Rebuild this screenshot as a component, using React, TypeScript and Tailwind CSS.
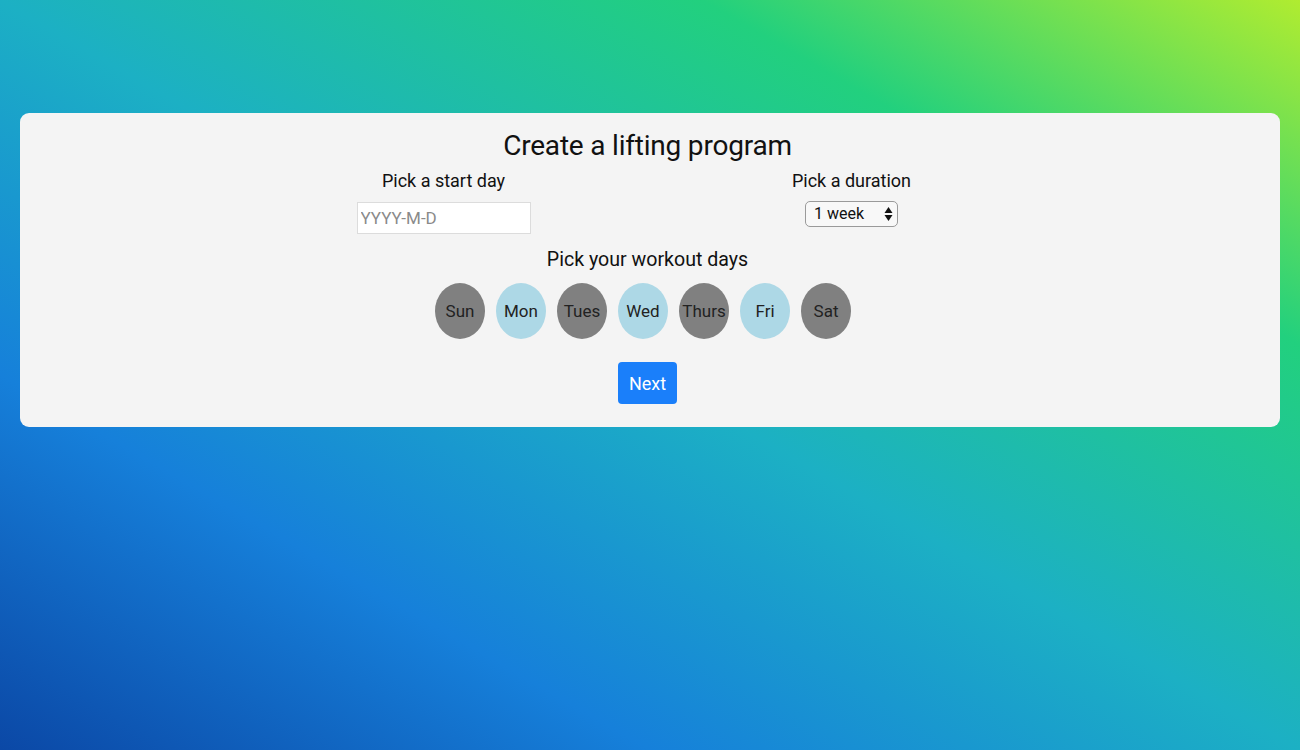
const days = [
  { name: "Sun", on: false },
  { name: "Mon", on: true },
  { name: "Tues", on: false },
  { name: "Wed", on: true },
  { name: "Thurs", on: false },
  { name: "Fri", on: true },
  { name: "Sat", on: false },
];

export default function App() {
  return (
    <div className="h-[750px] w-full overflow-hidden bg-[linear-gradient(to_top_right,#0b48a6_0%,#1680da_25%,#1cb0c4_50%,#22d07e_77%,#b0ec30_100%)] pt-[113px] font-['Roboto','Liberation_Sans',sans-serif] text-[#111]">
      <div className="mx-5 rounded-[9px] bg-[#f4f4f4] pb-[23px] pr-[5px] pt-[16px] text-center">
        <h1 className="text-[28px] leading-[34px] tracking-[-0.2px]">Create a lifting program</h1>

        {/* start day + duration */}
        <div className="mt-[6px] flex justify-center">
          <div className="flex w-[408px] flex-col items-center">
            <label className="text-[18px] leading-[24px]">Pick a start day</label>
            <input
              type="text"
              placeholder="YYYY-M-D"
              className="mt-[9px] h-[32px] w-[174px] border border-[#dcdcdc] bg-white px-[3px] text-[17px] outline-none placeholder:text-[#8a8a8a]"
            />
          </div>
          <div className="flex w-[408px] flex-col items-center">
            <label className="text-[18px] leading-[24px]">Pick a duration</label>
            <div className="mt-[8px] flex h-[26px] w-[93px] items-center justify-between rounded-[5px] border border-[#9a9a9a] bg-[#f8f8f8] pl-[8px] pr-[4px] text-[16px]">
              <span>1 week</span>
              <svg width="9" height="16" viewBox="0 0 9 16">
                <path d="M4.5 1 L8.5 7 L0.5 7 Z" fill="#111" />
                <path d="M4.5 15 L8.5 9 L0.5 9 Z" fill="#111" />
              </svg>
            </div>
          </div>
        </div>

        <h2 className="mt-[12px] text-[19.6px] leading-[28px]">Pick your workout days</h2>

        <div className="mt-[9px] flex justify-center gap-[11px] pr-[9px]">
          {days.map((d) => (
            <button
              key={d.name}
              className={
                d.on
                  ? "flex h-[56px] w-[50px] items-center justify-center rounded-[50%] bg-[#add8e6] pt-[1px] text-[17px] text-[#222]"
                  : "flex h-[56px] w-[50px] items-center justify-center rounded-[50%] bg-[#808080] pt-[1px] text-[17px] text-[#222]"
              }
            >
              {d.name}
            </button>
          ))}
        </div>

        <button className="mt-[23px] h-[42px] w-[59px] rounded-[4px] bg-[#1a7ffa] text-[18px] text-white">
          Next
        </button>
      </div>
    </div>
  );
}
